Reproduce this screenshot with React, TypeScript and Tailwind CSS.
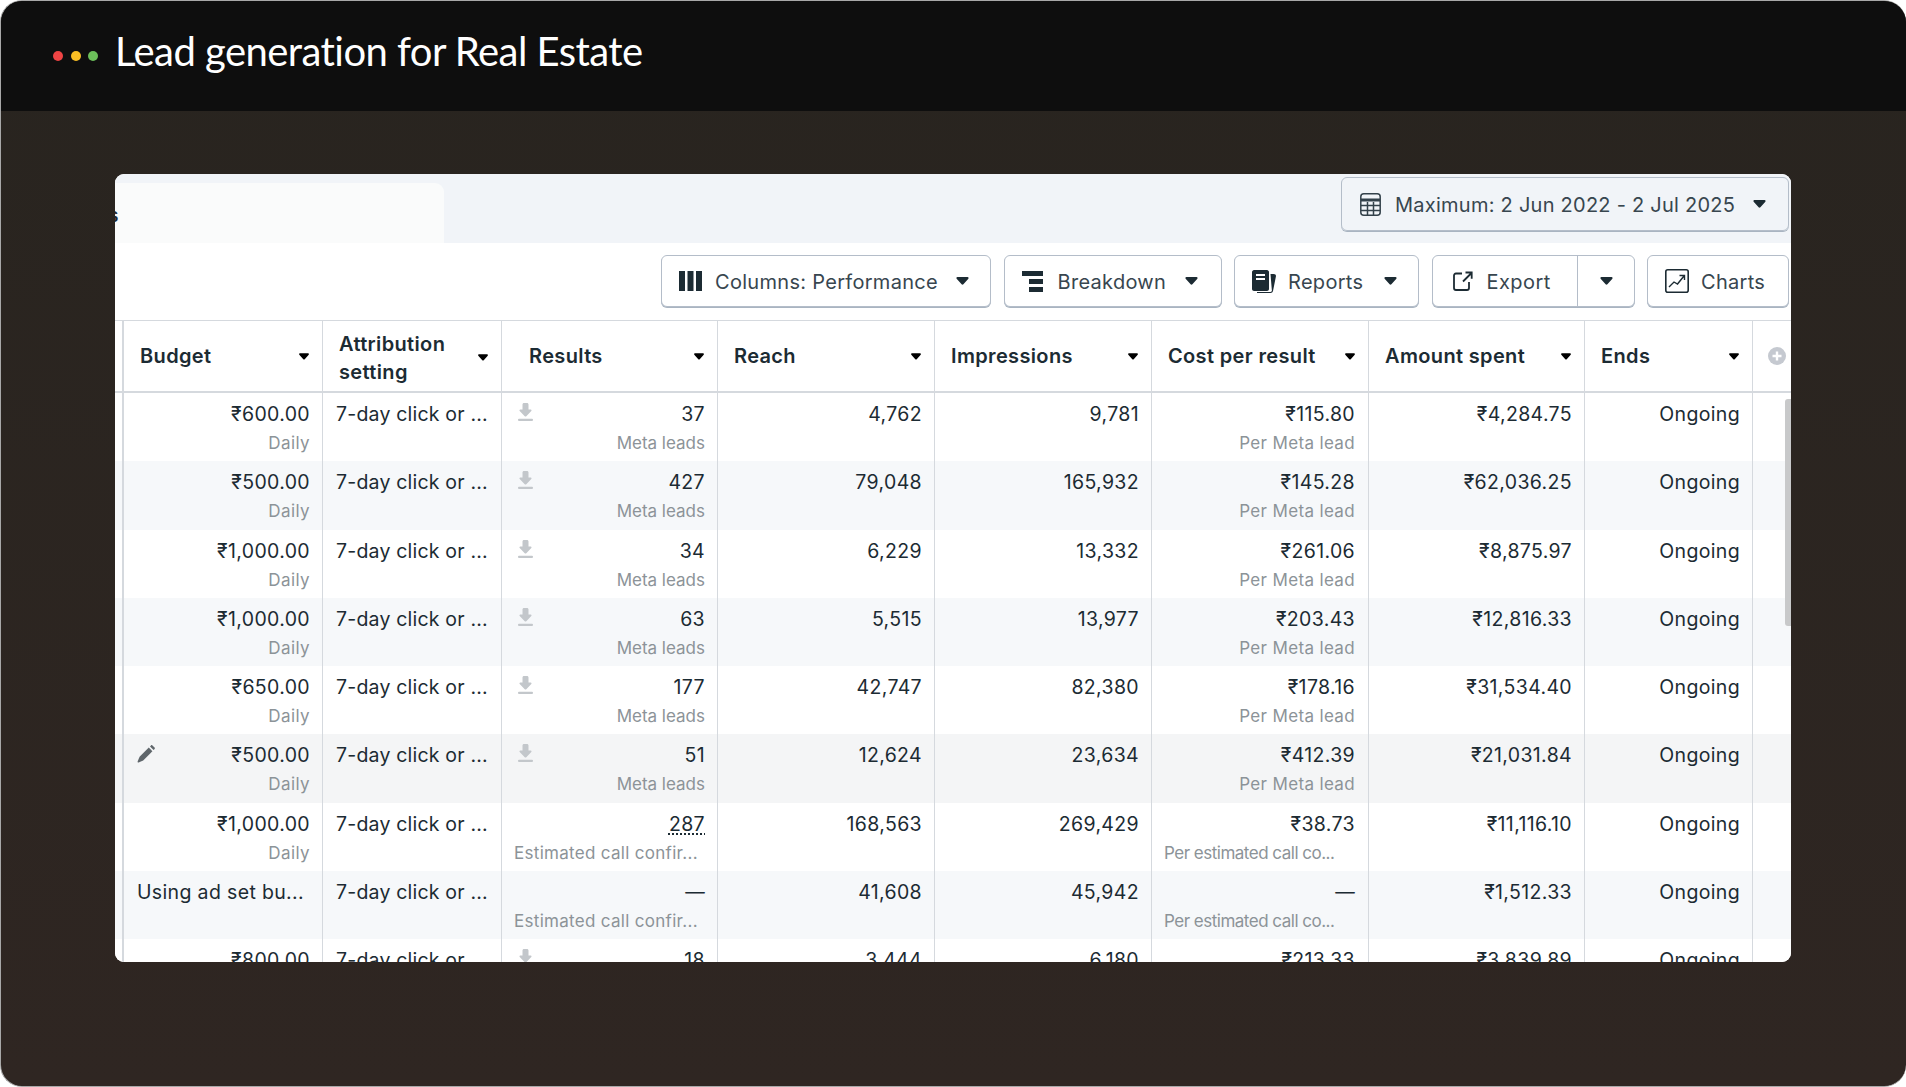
const rows = [
  { budget: "₹600.00", results: "37", reach: "4,762", impressions: "9,781", cost: "₹115.80", spent: "₹4,284.75" },
  { budget: "₹500.00", results: "427", reach: "79,048", impressions: "165,932", cost: "₹145.28", spent: "₹62,036.25" },
  { budget: "₹1,000.00", results: "34", reach: "6,229", impressions: "13,332", cost: "₹261.06", spent: "₹8,875.97" },
  { budget: "₹1,000.00", results: "63", reach: "5,515", impressions: "13,977", cost: "₹203.43", spent: "₹12,816.33" },
  { budget: "₹650.00", results: "177", reach: "42,747", impressions: "82,380", cost: "₹178.16", spent: "₹31,534.40" },
  { budget: "₹500.00", results: "51", reach: "12,624", impressions: "23,634", cost: "₹412.39", spent: "₹21,031.84", edit: true },
  { budget: "₹1,000.00", results: "287", reach: "168,563", impressions: "269,429", cost: "₹38.73", spent: "₹11,116.10", call: true },
  { budget: "Using ad set bu...", results: "—", reach: "41,608", impressions: "45,942", cost: "—", spent: "₹1,512.33", call: true, adset: true },
  { budget: "₹800.00", results: "18", reach: "3,444", impressions: "6,180", cost: "₹213.33", spent: "₹3,839.89" },
];

const cols = "grid grid-cols-[9px_199px_179px_216px_217px_217px_217px_216px_168px_38px]";
const cell = "border-r border-[#d5d9de] pt-[9px] pr-[12px] leading-6";
const sub = "mt-[5px] text-[17px] leading-6 text-[#8c9398]";

function Caret({ className = "" }: { className?: string }) {
  return (
    <svg viewBox="0 0 14 9" className={className} fill="currentColor">
      <path d="M1.3 0h11.4c1 0 1.5 1.1.9 1.9L8 8.2c-.5.6-1.5.6-2 0L.4 1.9C-.2 1.1.3 0 1.3 0z" />
    </svg>
  );
}

function Download() {
  return (
    <svg viewBox="0 0 15 18" className="h-[18px] w-[15px] shrink-0 mt-[1px] text-[#c3c7cb]" fill="currentColor">
      <path d="M4.5 1.5C4.5.6 5.1 0 6 0h3c.9 0 1.5.6 1.5 1.5V6.5h2.2c.8 0 1.1.9.6 1.4L8.3 13.2c-.4.4-1.2.4-1.6 0L1.7 7.9c-.5-.5-.2-1.4.6-1.4h2.2z" />
      <rect x="0" y="15.8" width="15" height="2.2" rx="1" />
    </svg>
  );
}

function Pencil() {
  return (
    <svg viewBox="0 0 18 18" className="mt-[2px] h-[18px] w-[18px] shrink-0 text-[#5f666b]" fill="currentColor">
      <path d="M11.8 2.6l3.6 3.6L6.2 15.4 1.6 17.4c-.6.2-1.2-.4-1-1l2-4.6z" />
      <path d="M13 1.4l1-1c.4-.4 1-.4 1.4 0l2.2 2.2c.4.4.4 1 0 1.4l-1 1z" />
    </svg>
  );
}

function Head({ label, pad = "pl-4" }: { label: React.ReactNode; pad?: string }) {
  return (
    <div className={`flex items-center justify-between border-r border-[#d5d9de] pr-[13px] text-[20px] font-semibold leading-7 tracking-[0.35px] text-[#1c2b33] ${pad}`}>
      <span className="whitespace-nowrap">{label}</span>
      <Caret className="h-[7px] w-[10px] shrink-0 text-black" />
    </div>
  );
}

function Btn({ width, children }: { width: string; children: React.ReactNode }) {
  return (
    <div className={`flex h-[52px] items-center rounded-[6px] border border-[#b4bdc9] bg-white pl-[17px] text-[20px] tracking-[0.3px] text-[#38464f] shadow-[0_1px_0_#a9b4c1] ${width}`}>
      {children}
    </div>
  );
}

export default function App() {
  return (
    <div className="h-[1087px] w-[1906px] bg-white" style={{ fontFamily: "Inter, Roboto, sans-serif" }}>
      <div className="flex h-full flex-col overflow-hidden rounded-[22px] border-y border-l border-[#a8a8a8] bg-linear-to-b from-[#28241f] to-[#2f2622]">
        {/* title bar */}
        <div className="flex h-[110px] shrink-0 items-start bg-[#0e0e0e] pl-[52px] pt-[24px]">
          <div className="mt-[26px] flex gap-[7.5px]">
            <span className="h-[10px] w-[10px] rounded-full bg-[#ef4444]" />
            <span className="h-[10px] w-[10px] rounded-full bg-[#fbbf24]" />
            <span className="h-[10px] w-[10px] rounded-full bg-[#6cbf5a]" />
          </div>
          <h1 className="ml-[17px] text-[40px] leading-[52px] tracking-[-0.55px] text-white" style={{ fontFamily: "Lato, sans-serif" }}>
            Lead generation for Real Estate
          </h1>
        </div>

        {/* ads manager card */}
        <div className="relative ml-[114px] mt-[63px] flex h-[788px] w-[1676px] flex-col overflow-hidden rounded-[9px] bg-white text-[#1c2b33]">
          <div className="flex h-[69px] shrink-0 justify-between bg-[#f1f4f8] pr-[2px] pt-[3px]">
            <div className="mt-[6px] flex h-[60px] w-[329px] items-center overflow-hidden rounded-tr-[9px] bg-[#fafbfb] pt-[6px] text-[19px] font-semibold">
              <span className="-ml-[7px]">s</span>
            </div>
            <div className="flex h-[54px] w-[448px] items-center rounded-[6px] border border-[#b4bdc9] pl-[18px] text-[20px] tracking-[0.25px] text-[#38464f] shadow-[0_1px_0_#a9b4c1]">
              <svg viewBox="0 0 21 23" className="h-[23px] w-[21px] shrink-0 text-[#33414a]" fill="none" stroke="currentColor" strokeWidth="1.5">
                <rect x="0.8" y="0.8" width="19.4" height="21.4" rx="3" />
                <path d="M1 7h19" strokeWidth="3" />
                <path d="M1 12.5h19M1 17.5h19M7.5 9v13M13.5 9v13" />
              </svg>
              <span className="ml-[14px] mt-[1px] w-[340px] whitespace-nowrap">Maximum: 2 Jun 2022 - 2 Jul 2025</span>
              <Caret className="ml-[18px] h-[8px] w-[13px] text-[#1c2b33]" />
            </div>
          </div>

          <div className="flex h-[77px] shrink-0 items-start justify-end gap-[12.5px] pr-[2px] pt-[12px]">
            <Btn width="w-[330px]">
              <svg viewBox="0 0 23 20" className="h-[20px] w-[23px] shrink-0 text-[#1c2b33]" fill="currentColor">
                <path d="M0 0h6v20H0zM8.5 0h6v20h-6zM17 0h6v20h-6z" />
              </svg>
              <span className="ml-[13px] mt-[2px] w-[223px] whitespace-nowrap">Columns: Performance</span>
              <Caret className="ml-[18px] h-[8px] w-[13px] text-[#1c2b33]" />
            </Btn>
            <Btn width="w-[218px]">
              <svg viewBox="0 0 21 21" className="h-[21px] w-[21px] shrink-0 text-[#1c2b33]" fill="currentColor">
                <path d="M0 0h21v5H0zM7 8h14v5H7zM7 16h14v5H7z" />
              </svg>
              <span className="ml-[15px] mt-[2px] w-[109px]">Breakdown</span>
              <Caret className="ml-[18px] h-[8px] w-[13px] text-[#1c2b33]" />
            </Btn>
            <Btn width="w-[185px]">
              <svg viewBox="0 0 24 23" className="h-[23px] w-[24px] shrink-0 text-[#1c2b33]" fill="currentColor">
                <path d="M2 0h13c1 0 2 1 2 2v17c0 1-1 2-2 2H2c-1 0-2-1-2-2V2C0 1 1 0 2 0zM4 4v2h9V4zm0 4v2h9V8z" fillRule="evenodd" />
                <path d="M18.5 4H20c2 0 4 0 4 2l-3 15c-.3 1.3-1.2 2-2.5 2H5v-1h13.5c.7 0 1.3-.6 1.4-1.2L18.5 4z" />
              </svg>
              <span className="ml-[12px] mt-[2px] w-[78px]">Reports</span>
              <Caret className="ml-[18px] h-[8px] w-[13px] text-[#1c2b33]" />
            </Btn>
            <div className="flex h-[52px] w-[203px] items-center rounded-[6px] border border-[#b4bdc9] bg-white text-[20px] tracking-[0.45px] text-[#38464f] shadow-[0_1px_0_#a9b4c1]">
              <div className="flex w-[145px] items-center self-stretch border-r border-[#b4bdc9] pl-[20px]">
                <svg viewBox="0 0 20 20" className="h-[20px] w-[20px] shrink-0 text-[#1c2b33]" fill="none" stroke="currentColor" strokeWidth="1.8">
                  <path d="M9 2.5H3c-1.2 0-2 .8-2 2V17c0 1.2.8 2 2 2h11c1.2 0 2-.8 2-2v-6" />
                  <path d="M10 10.5L18 2.5M12.5 1.5h6.2v6.2" />
                </svg>
                <span className="ml-[14px] mt-[2px]">Export</span>
              </div>
              <Caret className="ml-[22px] h-[8px] w-[13px] text-[#1c2b33]" />
            </div>
            <Btn width="w-[142px]">
              <svg viewBox="0 0 24 24" className="h-[24px] w-[24px] shrink-0 text-[#1c2b33]" fill="none" stroke="currentColor" strokeWidth="1.6">
                <rect x="0.8" y="0.8" width="22.4" height="22.4" rx="2" />
                <path d="M4 18l5-5 3.5 2L19 7M14.5 6.5H19.5V11" strokeWidth="1.4" />
              </svg>
              <span className="ml-[12px] mt-[2px]">Charts</span>
            </Btn>
          </div>

          {/* table header */}
          <div className={`${cols} h-[73px] shrink-0 border-y-2 border-t-[1.5px] border-[#d5d9de]`}>
            <div className="border-r-2 border-[#d5d9de]" />
            <Head label="Budget" />
            <Head label={<>Attribution<br />setting</>} pad="pl-4 pt-[3px]" />
            <Head label="Results" pad="pl-[27px]" />
            <Head label="Reach" />
            <Head label="Impressions" />
            <Head label="Cost per result" />
            <Head label="Amount spent" />
            <Head label="Ends" />
            <div className="flex items-center justify-center pl-[10px]">
              <svg viewBox="0 0 18 18" className="h-[18px] w-[18px] text-[#c5c9d0]">
                <circle cx="9" cy="9" r="9" fill="currentColor" />
                <path d="M9 4.5v9M4.5 9h9" stroke="#fff" strokeWidth="2.4" />
              </svg>
            </div>
          </div>

          {/* table rows */}
          <div className="min-h-0 flex-1 overflow-hidden">
            {rows.map((r, i) => (
              <div
                key={i}
                className={`${cols} h-[68.25px] text-[19.5px] tracking-[0.35px] ${r.edit ? "bg-[#f4f5f6]" : i % 2 === 1 ? "bg-[#f6f8fa]" : "bg-white"}`}
              >
                <div className="border-r-2 border-[#d5d9de]" />
                <div className={`${cell} ${r.adset ? "pl-[13px]" : "pl-[13px] text-right"}`}>
                  {r.edit ? (
                    <div className="flex justify-between">
                      <Pencil />
                      <span>{r.budget}</span>
                    </div>
                  ) : (
                    <div className="whitespace-nowrap">{r.budget}</div>
                  )}
                  {!r.adset && <div className={`${sub} tracking-[0.4px]`}>Daily</div>}
                </div>
                <div className={`${cell} whitespace-nowrap pl-[13px] tracking-[0.2px]`}>7-day click or ...</div>
                <div className={`${cell} pl-4`}>
                  <div className="flex items-start justify-between">
                    {r.call ? <span /> : <Download />}
                    <span className={r.results === "287" ? "underline decoration-dotted decoration-[1.5px] underline-offset-[3px]" : ""}>{r.results}</span>
                  </div>
                  {r.call ? (
                    <div className={`${sub} -ml-[4px] whitespace-nowrap tracking-[0.3px]`}>Estimated call confir...</div>
                  ) : (
                    <div className={`${sub} text-right tracking-[0px]`}>Meta leads</div>
                  )}
                </div>
                <div className={`${cell} text-right`}>{r.reach}</div>
                <div className={`${cell} text-right`}>{r.impressions}</div>
                <div className={`${cell} pr-[13px] text-right`}>
                  <div>{r.cost}</div>
                  {r.call ? (
                    <div className={`${sub} pl-[12px] text-left tracking-[-0.5px] whitespace-nowrap`}>Per estimated call co...</div>
                  ) : (
                    <div className={`${sub} tracking-[0.35px]`}>Per Meta lead</div>
                  )}
                </div>
                <div className={`${cell} text-right`}>{r.spent}</div>
                <div className={`${cell} text-right`}>Ongoing</div>
                <div />
              </div>
            ))}
          </div>

          {/* scrollbar thumb */}
          <div className="absolute right-0 top-[225px] h-[227px] w-[6px] rounded-l-[3px] bg-[#c8c9ca]" />
        </div>
      </div>
    </div>
  );
}
